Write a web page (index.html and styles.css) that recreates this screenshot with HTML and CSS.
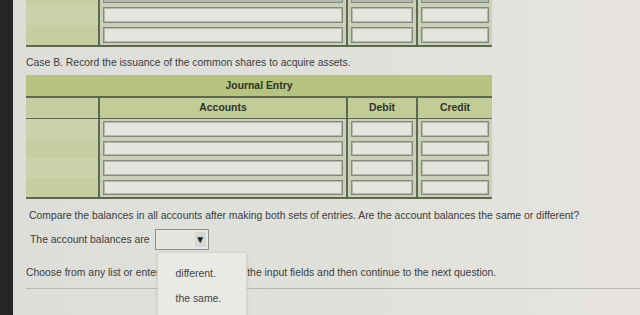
FILE: index.html
```html
<!DOCTYPE html>
<html>
<head>
<meta charset="utf-8">
<link rel="stylesheet" href="styles.css">
</head>
<body>
<div class="bezel"></div>
<div class="page">
  <div class="jtable top">
    <div class="jrow short">
      <div class="lc"></div><div class="cell"><span class="box"></span></div><div class="cell"><span class="box"></span></div><div class="cell"><span class="box"></span></div>
    </div>
    <div class="jrow">
      <div class="lc alt"></div><div class="cell"><span class="box"></span></div><div class="cell"><span class="box"></span></div><div class="cell"><span class="box"></span></div>
    </div>
    <div class="jrow">
      <div class="lc"></div><div class="cell"><span class="box"></span></div><div class="cell"><span class="box"></span></div><div class="cell"><span class="box"></span></div>
    </div>
  </div>

  <p class="case">Case B. Record the issuance of the common shares to acquire assets.</p>

  <div class="jtable main">
    <div class="jtitle">Journal Entry</div>
    <div class="jrow head">
      <div class="lc"></div><div class="hc">Accounts</div><div class="hc">Debit</div><div class="hc">Credit</div>
    </div>
    <div class="jrow">
      <div class="lc alt"></div><div class="cell"><span class="box"></span></div><div class="cell"><span class="box"></span></div><div class="cell"><span class="box"></span></div>
    </div>
    <div class="jrow">
      <div class="lc"></div><div class="cell"><span class="box"></span></div><div class="cell"><span class="box"></span></div><div class="cell"><span class="box"></span></div>
    </div>
    <div class="jrow">
      <div class="lc alt"></div><div class="cell"><span class="box"></span></div><div class="cell"><span class="box"></span></div><div class="cell"><span class="box"></span></div>
    </div>
    <div class="jrow">
      <div class="lc"></div><div class="cell"><span class="box"></span></div><div class="cell"><span class="box"></span></div><div class="cell"><span class="box"></span></div>
    </div>
  </div>

  <p class="compare">Compare the balances in all accounts after making both sets of entries. Are the account balances the same or different?</p>

  <div class="answer">
    <span>The account balances are</span>
    <span class="select">
      <span class="arrow">&#9660;</span>
      <span class="menu">
        <span class="opt">different.</span>
        <span class="opt">the same.</span>
      </span>
    </span>
  </div>

  <p class="choose">Choose from any list or enter any <span class="tight">number in</span> the input fields and then continue to the next question.</p>
</div>
</body>
</html>
```

FILE: styles.css
```css
html, body {
  margin: 0;
  padding: 0;
}
body {
  width: 640px;
  height: 315px;
  overflow: hidden;
  background: linear-gradient(90deg, #dddeda 0%, #e1e1dc 60%, #e7e4e0 100%);
  font-family: "Liberation Sans", Arial, sans-serif;
  font-size: 10.4px;
  color: #3b3d3b;
  display: flex;
}
.bezel {
  width: 13px;
  flex: none;
  background: #262626;
}
.page {
  flex: 1;
  padding-left: 13px;
  position: relative;
}
.jtable {
  width: 466px;
  background: #5d6753;
  border-bottom: 2px solid #5d6753;
  display: flex;
  flex-direction: column;
}
.jrow {
  display: grid;
  grid-template-columns: 72px 246px 68px 74px;
  column-gap: 2px;
  height: 19.5px;
}
.top .jrow {
  height: 20px;
}
.top .jrow.short {
  height: 5px;
}
.lc {
  background: #c4cea0;
}
.lc.alt {
  background: #cad3ab;
}
.cell {
  background: #c9d0b6;
  padding: 2px 3px;
  display: flex;
}
.top .jrow.short .cell {
  padding-top: 0;
}
.box {
  flex: 1;
  background: #e3e5de;
  border: 1px solid #858b7c;
  box-shadow: inset 0 0 0 1px #b4b9ac;
}
.top .jrow.short .box {
  border-top: none;
}
.jtitle {
  height: 21px;
  line-height: 22px;
  background: #b6c47f;
  text-align: center;
  font-weight: bold;
  color: #2f342a;
  margin-bottom: 2px;
}
.jrow.head {
  height: 19px;
  margin-bottom: 2px;
}
.hc {
  background: #c1cc97;
  text-align: center;
  line-height: 20px;
  font-weight: bold;
  color: #2f342a;
}
.case {
  margin: 9px 0 5px 0;
  line-height: 14px;
}
.compare {
  margin: 10px 0 0 3px;
  line-height: 14px;
}
.answer {
  margin-top: 6px;
  margin-left: 4px;
  display: flex;
  align-items: center;
  gap: 5px;
  height: 21px;
}
.select {
  position: relative;
  width: 52px;
  height: 19px;
  border: 1px solid #8e8e8c;
  background: #e5e5e1;
  display: flex;
  justify-content: flex-end;
  align-items: center;
}
.arrow {
  width: 11px;
  height: 15px;
  margin-right: 2px;
  background: #d6d6d3;
  font-size: 10px;
  line-height: 15px;
  text-align: center;
  color: #1a1a1a;
}
.menu {
  position: absolute;
  left: 1px;
  top: 22px;
  width: 90px;
  height: 70px;
  background: #e9e9e6;
  border: 1px solid #d3d3cf;
  border-radius: 3px;
  box-shadow: 0 1px 3px rgba(0,0,0,0.12);
  display: flex;
  flex-direction: column;
  padding-top: 14px;
  box-sizing: border-box;
  gap: 12px;
  z-index: 2;
}
.opt {
  padding-left: 18px;
  line-height: 13px;
  color: #444;
  font-size: 10.4px;
}
.tight {
  letter-spacing: 1.8px;
}
.choose {
  margin: 16px 0 0 0;
  padding-bottom: 8px;
  line-height: 14px;
  border-bottom: 1px solid #b9b9b5;
}
```
